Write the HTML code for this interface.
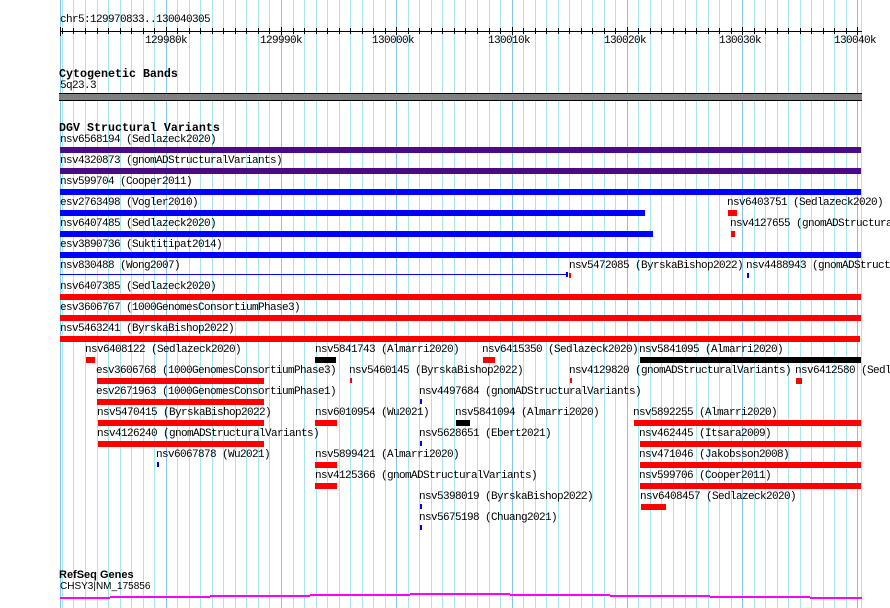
<!DOCTYPE html>
<html><head><meta charset="utf-8">
<style>
html,body{margin:0;padding:0;background:#fff;}
#c{position:relative;width:890px;height:608px;overflow:hidden;font-family:"Liberation Mono","DejaVu Sans Mono",monospace;font-size:10px;color:#000;}
.g{position:absolute;top:0;height:608px;width:1px;background:#a8e6ee;}
.G{position:absolute;top:0;height:608px;width:1px;background:#88c4ea;}
.t{position:absolute;white-space:pre;line-height:11px;font-size:11px;letter-spacing:-0.6px;}
.h{position:absolute;white-space:pre;font-weight:bold;font-size:11.67px;line-height:12px;font-family:"Liberation Mono",monospace;}
.b{position:absolute;height:6px;}
.r{background:#ff0000}.u{background:#0000ff}.p{background:#4b0a87}.k{background:#000}
</style></head><body>
<div id="c">
<div id="grid"></div>
<div class="t" style="left:60px;top:15px;">chr5:129970833..130040305</div>
<div style="position:absolute;left:60px;top:31px;width:802px;height:1px;background:#000"></div>
<div id="ticks"></div>
<div class="t" style="left:145px;top:36px;">129980k</div>
<div class="t" style="left:260px;top:36px;">129990k</div>
<div class="t" style="left:372px;top:36px;">130000k</div>
<div class="t" style="left:488px;top:36px;">130010k</div>
<div class="t" style="left:604px;top:36px;">130020k</div>
<div class="t" style="left:719px;top:36px;">130030k</div>
<div class="t" style="left:834px;top:36px;">130040k</div>

<div class="h" style="left:59px;top:68px;">Cytogenetic Bands</div>
<div class="t" style="left:60px;top:81px;">5q23.3</div>
<div style="position:absolute;left:59px;top:93px;width:803px;height:6px;background:#808080;border-top:1px solid #000;border-bottom:1px solid #000"></div>

<div class="h" style="left:59px;top:122px;">DGV Structural Variants</div>
<div id="f"></div>

<div class="h" style="left:59px;top:569px;font-family:'Liberation Sans',sans-serif;font-size:11px;">RefSeq Genes</div>
<div class="t" style="left:60px;top:581px;font-family:'Liberation Sans',sans-serif;font-size:10px;letter-spacing:0;">CHSY3|NM_175856</div>
<div id="gene"></div>
</div>
<script>
var grid=document.getElementById('grid'),h='';
var s=0.011530;
function X(bp){return 60+(bp-129970833)*s;}
for(var k=129971;k<=130040;k++){var x=Math.round(X(k*1000));var maj=(k%10==0);
h+='<div class="'+(maj?'G':'g')+'" style="left:'+x+'px"></div>';}
h+='<div class="G" style="left:60px"></div><div class="g" style="left:861px"></div>';
grid.innerHTML=h;
var t='';
for(var k=129971;k<=130040;k++){var x=Math.round(X(k*1000));var maj=(k%10==0);
t+='<div style="position:absolute;left:'+x+'px;top:'+(maj?27:28)+'px;width:1px;height:'+(maj?8:6)+'px;background:#000"></div>';}
t+='<div style="position:absolute;left:60px;top:27px;width:1px;height:9px;background:#000"></div>';
document.getElementById('ticks').innerHTML=t;
var F=[
[147,'p',60,861,60,'nsv6568194 (Sedlazeck2020)'],
[168,'p',60,861,60,'nsv4320873 (gnomADStructuralVariants)'],
[189,'u',60,861,60,'nsv599704 (Cooper2011)'],
[210,'u',60,645,60,'esv2763498 (Vogler2010)'],
[210,'r',728,737,727,'nsv6403751 (Sedlazeck2020)'],
[231,'u',60,653,60,'nsv6407485 (Sedlazeck2020)'],
[231,'r',731,735,730,'nsv4127655 (gnomADStructuralVariants)'],
[252,'u',60,861,60,'esv3890736 (Suktitipat2014)'],
[273,'',0,0,60,'nsv830488 (Wong2007)'],
[273,'r',569,571,569,'nsv5472085 (ByrskaBishop2022)'],
[273,'u',747,749,746,'nsv4488943 (gnomADStructuralVariants)'],
[294,'r',60,861,60,'nsv6407385 (Sedlazeck2020)'],
[315,'r',60,861,60,'esv3606767 (1000GenomesConsortiumPhase3)'],
[336,'r',60,860,60,'nsv5463241 (ByrskaBishop2022)'],
[357,'r',86,95,85,'nsv6408122 (Sedlazeck2020)'],
[357,'k',315,336,315,'nsv5841743 (Almarri2020)'],
[357,'r',483,495,482,'nsv6415350 (Sedlazeck2020)'],
[357,'k',640,861,639,'nsv5841095 (Almarri2020)'],
[378,'r',97,264,96,'esv3606768 (1000GenomesConsortiumPhase3)'],
[378,'r',350,352,349,'nsv5460145 (ByrskaBishop2022)'],
[378,'r',570,572,569,'nsv4129820 (gnomADStructuralVariants)'],
[378,'r',796,802,795,'nsv6412580 (Sedlazeck2020)'],
[399,'r',97,264,96,'esv2671963 (1000GenomesConsortiumPhase1)'],
[399,'u',420,422,419,'nsv4497684 (gnomADStructuralVariants)'],
[420,'r',98,264,97,'nsv5470415 (ByrskaBishop2022)'],
[420,'r',315,337,315,'nsv6010954 (Wu2021)'],
[420,'k',456,470,455,'nsv5841094 (Almarri2020)'],
[420,'r',634,861,633,'nsv5892255 (Almarri2020)'],
[441,'r',98,264,97,'nsv4126240 (gnomADStructuralVariants)'],
[441,'u',420,422,419,'nsv5628651 (Ebert2021)'],
[441,'r',640,861,639,'nsv462445 (Itsara2009)'],
[462,'u',157,159,156,'nsv6067878 (Wu2021)'],
[462,'r',315,337,315,'nsv5899421 (Almarri2020)'],
[462,'r',640,861,639,'nsv471046 (Jakobsson2008)'],
[483,'r',315,337,315,'nsv4125366 (gnomADStructuralVariants)'],
[483,'r',640,861,639,'nsv599706 (Cooper2011)'],
[504,'u',420,422,419,'nsv5398019 (ByrskaBishop2022)'],
[504,'r',641,666,640,'nsv6408457 (Sedlazeck2020)'],
[525,'u',420,422,419,'nsv5675198 (Chuang2021)']
];
var o='';
F.forEach(function(a){
 o+='<div class="t" style="left:'+a[4]+'px;top:'+(a[0]-12)+'px">'+a[5]+'</div>';
 if(a[1]){var w=a[3]-a[2];var small=w<4;
 o+='<div class="b '+a[1]+'" style="left:'+a[2]+'px;top:'+a[0]+'px;width:'+w+'px;'+(small?'height:5px;':'')+'"></div>';}
});
o+='<div style="position:absolute;left:60px;top:274px;width:506px;height:1px;background:#0000ff"></div>';
o+='<div style="position:absolute;left:566px;top:272px;width:2px;height:5px;background:#0000ff"></div>';
document.getElementById('f').innerHTML=o;
var gs=[[60,110,597],[110,210,596],[210,310,595],[310,410,594],[410,510,593],[510,610,594],[610,710,595],[710,810,596],[810,862,597]];
var gh='';gs.forEach(function(a){gh+='<div style="position:absolute;left:'+a[0]+'px;top:'+a[2]+'px;width:'+(a[1]-a[0])+'px;height:2px;background:#ff00ff"></div>';});
document.getElementById('gene').innerHTML=gh;
</script>
</body></html>
